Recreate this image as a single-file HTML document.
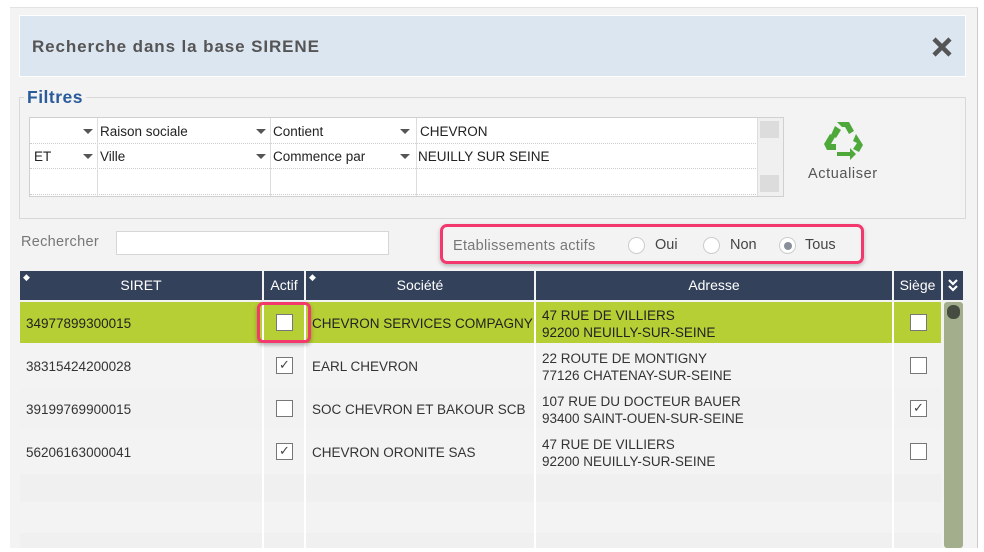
<!DOCTYPE html>
<html><head><meta charset="utf-8"><style>
*{box-sizing:border-box;margin:0;padding:0}
body{width:984px;height:552px;background:#fff;font-family:"Liberation Sans",sans-serif;position:relative;overflow:hidden;font-size:13px;color:#333}
.a{position:absolute}
.panel{left:10px;top:7px;width:968px;height:541px;background:#f3f3f3;border-top:1px solid #e2e2e2;border-right:1px solid #ccc}
.hdr{left:19px;top:15px;width:947px;height:62px;background:#dce6f1;border:1px solid #fff}
.fs{left:19px;top:97px;width:947px;height:122px;border:1px solid #d8d8d8}
.grid{left:29px;top:117px;width:755px;height:80px;background:#fff;border:1px solid #d0d0d0}
.cell{position:absolute;font-size:13.5px;color:#222}
.hl{position:absolute;left:0;width:728px;border-top:1px dotted #ccc}
.vl{position:absolute;top:0;height:78px;border-left:1px solid #ddd}
.arr{position:absolute;width:0;height:0;border-left:5px solid transparent;border-right:5px solid transparent;border-top:5px solid #555}
.th{position:absolute;top:271px;height:29px;background:#33425a;color:#fff;font-size:14px;text-align:center;line-height:29px}
.td{position:absolute;font-size:13.5px;color:#333}
.cb{position:absolute;width:17px;height:17px;border:1.5px solid #777;background:#fff}
.radio{position:absolute;width:17px;height:17px;border-radius:50%;border:1px solid #ccc;background:#fff}
</style></head><body>
<div class="a panel"></div>
<div class="a hdr"></div>
<div class="a" style="left:32px;top:37px;font-size:17px;font-weight:bold;color:#555;letter-spacing:0.9px">Recherche dans la base SIRENE</div>
<svg class="a" style="left:931px;top:36px" width="22" height="22"><path d="M3 3L19 19M19 3L3 19" stroke="#555" stroke-width="4.5"/></svg>
<div class="a fs"></div>
<div class="a" style="left:24px;top:87px;background:#f3f3f3;padding:0 3px;font-size:17.5px;font-weight:bold;color:#2a5c9c;letter-spacing:0.5px">Filtres</div>
<div class="a grid">
<div class="hl" style="top:25px"></div><div class="hl" style="top:50px"></div><div class="hl" style="top:76px"></div>
<div class="vl" style="left:67px"></div><div class="vl" style="left:240px"></div><div class="vl" style="left:386px"></div><div class="vl" style="left:727px"></div>
<div class="arr" style="left:53px;top:11px"></div><div class="arr" style="left:226px;top:11px"></div><div class="arr" style="left:370px;top:11px"></div>
<div class="arr" style="left:53px;top:36px"></div><div class="arr" style="left:226px;top:36px"></div><div class="arr" style="left:370px;top:36px"></div>
<div class="cell" style="left:70px;top:6px">Raison sociale</div>
<div class="cell" style="left:243px;top:6px">Contient</div>
<div class="cell" style="left:390px;top:6px">CHEVRON</div>
<div class="cell" style="left:4px;top:31px">ET</div>
<div class="cell" style="left:70px;top:31px">Ville</div>
<div class="cell" style="left:243px;top:31px">Commence par</div>
<div class="cell" style="left:388px;top:31px">NEUILLY SUR SEINE</div>
<div class="a" style="left:728px;top:0;width:25px;height:78px;background:#f0f0f0"></div>
<div class="a" style="left:730px;top:3px;width:19px;height:17px;background:#dcdcdc"></div>
<div class="a" style="left:730px;top:57px;width:19px;height:17px;background:#dcdcdc"></div>
</div>
<svg class="a" style="left:822px;top:120px" width="44" height="42" viewBox="0 0 44 42">
<g fill="#4ea93a"><path d="M15 2h12l5 9-5 3-4-7h-3z"/><path d="M13 6l6 4-5 8-5-3z"/><path d="M2 24l6-10 5 3-4 7 5 0 0 6h-9z"/><path d="M15 32h13v-4l6 6-6 6v-4h-13z"/><path d="M34 14l7 11-4 7-6-3 4-6-4-2z"/></g></svg>
<div class="a" style="left:808px;top:166px;font-size:14.5px;color:#555;letter-spacing:0.6px">Actualiser</div>
<div class="a" style="left:21px;top:234px;font-size:14.5px;color:#777;letter-spacing:0.3px">Rechercher</div>
<div class="a" style="left:116px;top:231px;width:273px;height:24px;background:#fff;border:1px solid #d6d6d6"></div>
<div class="a" style="left:440px;top:224px;width:424px;height:40px;border:3px solid #f2386d;border-radius:7px;box-shadow:0 2px 4px rgba(0,0,0,.25)"></div>
<div class="a" style="left:453px;top:238px;font-size:14.5px;color:#777;letter-spacing:0.3px">Etablissements actifs</div>
<div class="radio" style="left:628px;top:237px"></div><div class="a" style="left:655px;top:237px;font-size:14.5px;color:#444">Oui</div>
<div class="radio" style="left:703px;top:237px"></div><div class="a" style="left:730px;top:237px;font-size:14.5px;color:#444">Non</div>
<div class="radio" style="left:779px;top:237px"><div style="margin:4px;width:8px;height:8px;border-radius:50%;background:#8a9099"></div></div><div class="a" style="left:805px;top:237px;font-size:14.5px;color:#444">Tous</div>
<div class="th" style="left:20px;width:242px">SIRET</div>
<div class="th" style="left:264px;width:40px">Actif</div>
<div class="th" style="left:306px;width:228px">Société</div>
<div class="th" style="left:536px;width:356px">Adresse</div>
<div class="th" style="left:894px;width:47px">Siège</div>
<div class="th" style="left:943px;width:20px"></div>
<svg class="a" style="left:947px;top:278px" width="12" height="14"><path d="M2 2l4 4 4-4M2 8l4 4 4-4" stroke="#fff" stroke-width="2.2" fill="none"/></svg>
<div class="a" style="left:23px;top:272px;color:#fff;font-size:9px">◆</div>
<div class="a" style="left:309px;top:272px;color:#fff;font-size:9px">◆</div>
<div class="a" style="left:20px;top:302px;width:921px;height:41px;background:#b6cf34"></div>
<div class="a" style="left:20px;top:388px;width:921px;height:41px;background:#f2f2f2"></div>
<div class="a" style="left:20px;top:474px;width:921px;height:28px;background:#f0f0f0"></div>
<div class="a" style="left:20px;top:533px;width:921px;height:15px;background:#f0f0f0"></div>
<div class="a" style="left:262px;top:302px;width:2px;height:246px;background:#fff"></div>
<div class="a" style="left:304px;top:302px;width:2px;height:246px;background:#fff"></div>
<div class="a" style="left:534px;top:302px;width:2px;height:246px;background:#fff"></div>
<div class="a" style="left:892px;top:302px;width:2px;height:246px;background:#fff"></div>
<div class="a" style="left:944px;top:302px;width:19px;height:246px;background:#a3ae8d;border-radius:3px"></div>
<div class="a" style="left:947px;top:305px;width:13px;height:14px;background:#464c40;border-radius:6px"></div>
<div class="td" style="left:26px;top:316px;color:#222">34977899300015</div>
<div class="td" style="left:312px;top:316px;color:#222;width:222px;overflow:hidden;white-space:nowrap">CHEVRON SERVICES COMPAGNY SAS</div>
<div class="td" style="left:542px;top:307px;color:#222;line-height:17px">47 RUE DE VILLIERS<br>92200 NEUILLY-SUR-SEINE</div>
<div class="cb" style="left:276px;top:314px"></div><div class="cb" style="left:910px;top:314px"></div>
<div class="a" style="left:257px;top:302px;width:54px;height:41px;border:3px solid #f2386d;border-radius:6px;box-shadow:0 2px 4px rgba(0,0,0,.3)"></div>
<div class="td" style="left:26px;top:359px">38315424200028</div>
<div class="td" style="left:312px;top:359px">EARL CHEVRON</div>
<div class="td" style="left:542px;top:350px;line-height:17px">22 ROUTE DE MONTIGNY<br>77126 CHATENAY-SUR-SEINE</div>
<div class="cb" style="left:276px;top:357px;font-size:13px;line-height:13px;text-align:center;color:#444">✓</div><div class="cb" style="left:910px;top:357px"></div>
<div class="td" style="left:26px;top:402px">39199769900015</div>
<div class="td" style="left:312px;top:402px">SOC CHEVRON ET BAKOUR SCB</div>
<div class="td" style="left:542px;top:393px;line-height:17px">107 RUE DU DOCTEUR BAUER<br>93400 SAINT-OUEN-SUR-SEINE</div>
<div class="cb" style="left:276px;top:400px"></div><div class="cb" style="left:910px;top:400px;font-size:13px;line-height:13px;text-align:center;color:#444">✓</div>
<div class="td" style="left:26px;top:445px">56206163000041</div>
<div class="td" style="left:312px;top:445px">CHEVRON ORONITE SAS</div>
<div class="td" style="left:542px;top:436px;line-height:17px">47 RUE DE VILLIERS<br>92200 NEUILLY-SUR-SEINE</div>
<div class="cb" style="left:276px;top:443px;font-size:13px;line-height:13px;text-align:center;color:#444">✓</div><div class="cb" style="left:910px;top:443px"></div>
</body></html>
